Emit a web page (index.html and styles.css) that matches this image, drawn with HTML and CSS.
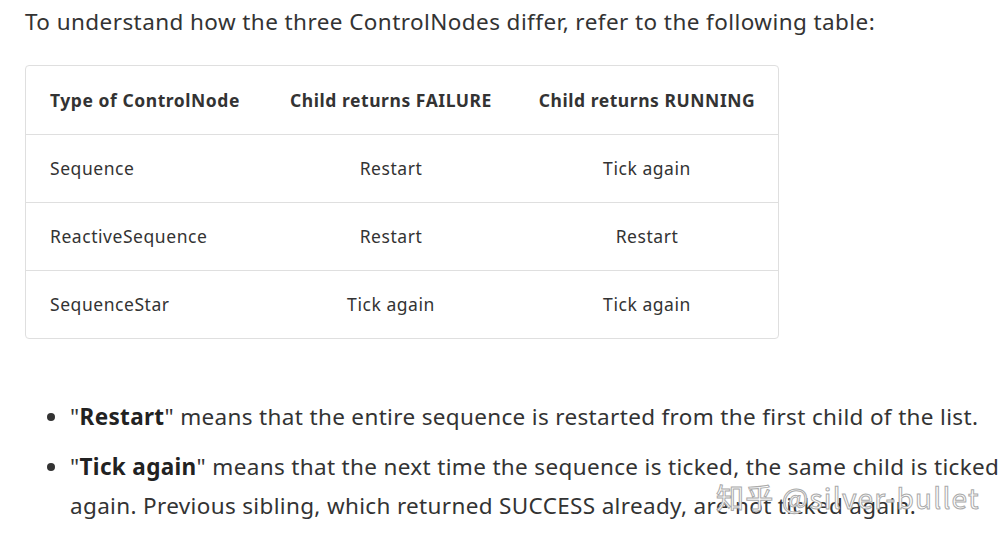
FILE: index.html
```html
<!DOCTYPE html>
<html>
<head>
<meta charset="utf-8">
<link rel="stylesheet" href="styles.css">
</head>
<body>
<div class="page">
  <p class="intro">To understand how the three ControlNodes differ, refer to the following table:</p>
  <div class="table-wrap">
    <table class="tbl">
      <thead>
        <tr><th class="c1">Type of ControlNode</th><th class="c2">Child returns FAILURE</th><th class="c3">Child returns RUNNING</th></tr>
      </thead>
      <tbody>
        <tr><td class="c1">Sequence</td><td class="c2">Restart</td><td class="c3">Tick again</td></tr>
        <tr><td class="c1">ReactiveSequence</td><td class="c2">Restart</td><td class="c3">Restart</td></tr>
        <tr><td class="c1">SequenceStar</td><td class="c2">Tick again</td><td class="c3">Tick again</td></tr>
      </tbody>
    </table>
  </div>
  <ul class="notes">
    <li>"<strong>Restart</strong>" means that the entire sequence is restarted from the first child of the list.</li>
    <li>"<strong>Tick again</strong>" means that the next time the sequence is ticked, the same child is ticked again. Previous sibling, which returned SUCCESS already, are not ticked again.</li>
  </ul>
  <div class="watermark">知乎 @silver-bullet</div>
</div>
</body>
</html>
```

FILE: styles.css
```css
html, body {
  margin: 0;
  padding: 0;
  background: #fff;
}
body {
  font-family: "Noto Sans", "Open Sans", "Noto Sans CJK SC", sans-serif;
  color: #333;
}
.page {
  position: relative;
  width: 1003px;
  height: 541px;
  overflow: hidden;
  padding: 0 0 0 25px;
  box-sizing: border-box;
}
.intro {
  margin: 0;
  padding-top: 2px;
  font-size: 22.5px;
  letter-spacing: 0.42px;
  line-height: 39px;
  white-space: nowrap;
}
.table-wrap {
  margin-top: 24px;
  width: 752px;
  border: 1px solid #dfdfdf;
  border-radius: 4px;
  overflow: hidden;
}
.tbl {
  width: 100%;
  table-layout: fixed;
  border-collapse: collapse;
  font-size: 17.5px;
  letter-spacing: 0.55px;
}
.tbl th, .tbl td {
  height: 68px;
  padding: 0 24px;
  box-sizing: border-box;
  white-space: nowrap;
}
.tbl th {
  font-weight: bold;
  color: #333;
}
.tbl tbody tr td {
  border-top: 1px solid #dfdfdf;
}
.c1 { text-align: left; width: 240px; }
.c2 { text-align: center; width: 250px; padding: 0 8px; }
.c3 { text-align: center; }
.tbl .c2, .tbl .c3 { padding: 0 8px; }
.notes {
  margin: 58px 0 0 0;
  padding-left: 45px;
  font-size: 22.5px;
  letter-spacing: 0.34px;
  line-height: 39px;
}
.notes li {
  margin-bottom: 11px;
}
.notes strong {
  color: #222;
}
.watermark {
  position: absolute;
  left: 716px;
  top: 477px;
  font-size: 28px;
  letter-spacing: 1.2px;
  color: #fff;
  -webkit-text-stroke: 1px #aaa;
  white-space: nowrap;
  font-family: "Noto Sans CJK SC", "Noto Sans", sans-serif;
}
```
